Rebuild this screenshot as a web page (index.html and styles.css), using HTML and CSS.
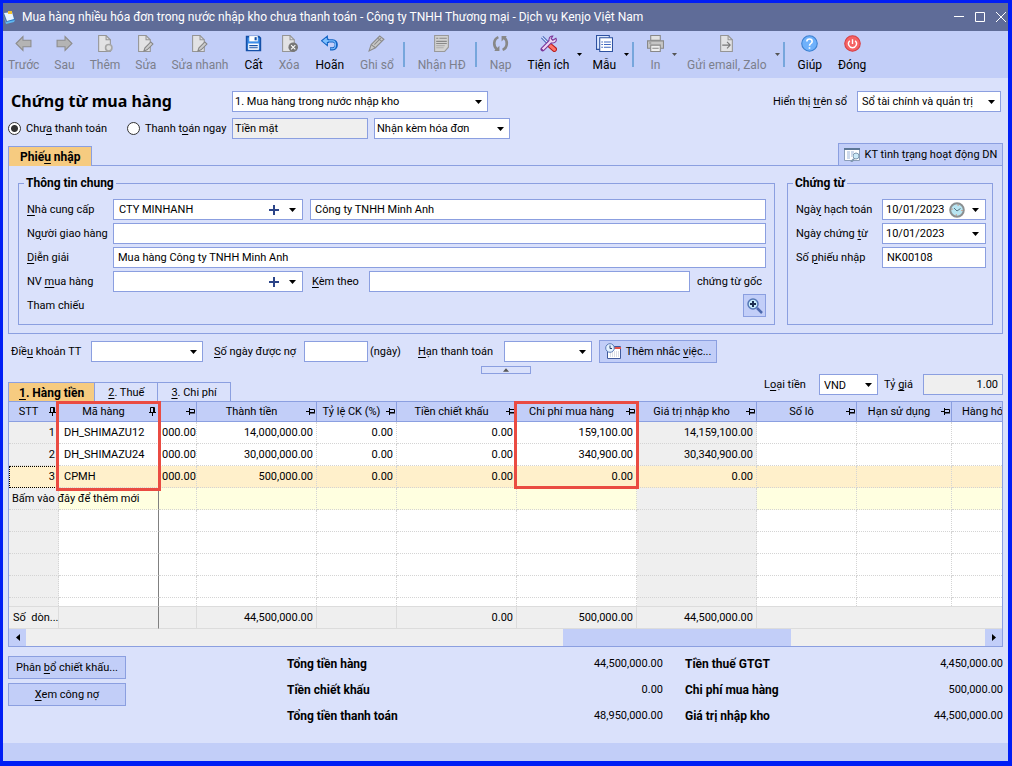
FILE: index.html
```
<!DOCTYPE html>
<html lang="vi">
<head>
    <meta charset="UTF-8">
    <meta name="viewport" content="width=device-width, initial-scale=1.0">
    <title>Chứng từ mua hàng</title>
    <link rel="stylesheet" href="styles.css">
</head>
<body>
<!-- Shared icons -->
<svg class="defs" aria-hidden="true">
    <symbol id="arrow" viewBox="0 0 16 16"><path d="M1 8L7.500 1.500V5H15V11H7.500V14.500Z" fill="#b4b4b4" stroke="#8c8c8c"/></symbol>
    <symbol id="page" viewBox="0 0 16 16"><path d="M2.500 .5H9.500L13.500 4.500V15.500H2.500Z" fill="#e2e2e4" stroke="#959595"/><path d="M9.500 .5V4.500H13.500" fill="none" stroke="#959595"/></symbol>
    <symbol id="pageEdit" viewBox="0 0 16 16"><use href="#page" width="16" height="16" x="-1"/><path d="M6.500 15L7.500 12L13 6.500L15 8.500L9.500 14Z" fill="#ccc" stroke="#858585"/></symbol>
    <symbol id="pin" viewBox="0 0 9 9"><path d="M0 4.500H3M3.500 1V8M4 2.500H8.500V5.500H4M4 6H9" fill="none" stroke="#000"/></symbol>
    <symbol id="pinned" viewBox="0 0 9 9"><path d="M2.500 5V.5H6.500V5M5.500 0V5M1 5.500H8M4.500 6V9" fill="none" stroke="#000"/></symbol>
    <symbol id="down" viewBox="0 0 7 4"><path d="M0 0H7L3.500 4Z" fill="currentColor"/></symbol>
    <symbol id="plus" viewBox="0 0 10 10"><path d="M5 0V10M0 5H10" stroke="#2b4488" stroke-width="2"/></symbol>
</svg>

<div class="window">
    <header class="titlebar">
        <svg class="app-icon" viewBox="0 0 13 14"><path d="M1 4L8 1L12 10L5 13Z" fill="#2878c8"/><path d="M1 3L9 2L11 9L4 11Z" fill="#e8f4ff"/><path d="M5 1H9V4H5Z" fill="#f4c430"/><path d="M0 4L3 12L12 10L11 12L3 14Z" fill="#60b8f0"/></svg>
        <span class="caption">Mua hàng nhiều hóa đơn trong nước nhập kho chưa thanh toán - Công ty TNHH Thương mại - Dịch vụ Kenjo Việt Nam</span>
        <button class="win-btn" aria-label="Minimize"><svg viewBox="0 0 10 10"><path d="M0 4.500H10" stroke="#fff"/></svg></button>
        <button class="win-btn" aria-label="Maximize"><svg viewBox="0 0 10 10"><path d="M.5 .5H9.500V9.500H.5Z" fill="none" stroke="#fff"/></svg></button>
        <button class="win-btn" aria-label="Close"><svg viewBox="0 0 10 10"><path d="M0 0L10 10M10 0L0 10" stroke="#fff"/></svg></button>
    </header>

    <nav class="toolbar">
        <button class="tool" disabled><svg viewBox="0 0 16 16"><use href="#arrow"/></svg>Trước</button>
        <button class="tool" disabled><svg class="flip" viewBox="0 0 16 16"><use href="#arrow"/></svg>Sau</button>
        <button class="tool" disabled><svg viewBox="0 0 16 16"><use href="#page"/><circle cx="12" cy="12" r="3" fill="#ddd" stroke="#a6a6a6" stroke-width="1.500"/></svg>Thêm</button>
        <button class="tool" disabled><svg viewBox="0 0 16 16"><use href="#pageEdit"/></svg>Sửa</button>
        <button class="tool" disabled><svg viewBox="0 0 16 16"><use href="#pageEdit"/></svg>Sửa nhanh</button>
        <button class="tool"><svg viewBox="0 0 16 16"><path d="M1.500 1.500H13L14.500 3V14.500H1.500Z" fill="#3d8ee8" stroke="#1450a8" stroke-width="1.500"/><path d="M4 1H12V6H4Z" fill="#fff"/><path d="M9 2H11V5H9Z" fill="#1450a8"/><path d="M3 8H13V14H3Z" fill="#fff"/><path d="M4 10H12M4 12H12" stroke="#1450a8"/></svg>Cất</button>
        <button class="tool" disabled><svg viewBox="0 0 16 16"><use href="#page" x="-1"/><circle cx="11.500" cy="11.500" r="4.500" fill="#777"/><path d="M9.500 9.500L13.500 13.500M13.500 9.500L9.500 13.500" stroke="#fff"/></svg>Xóa</button>
        <button class="tool"><svg viewBox="0 0 16 16"><path d="M3 5.500H11C15.500 5.500 15.500 13 11 13H8.500" fill="none" stroke="#1263c4" stroke-width="3"/><path d="M6 1L.5 5.500L6 10V7H7V4H6Z" fill="#7fc0ff" stroke="#1263c4"/><path d="M4 5.500H11C14.500 5.500 14.500 13 11 13H9" fill="none" stroke="#7fc0ff"/></svg>Hoãn</button>
        <button class="tool" disabled><svg viewBox="0 0 16 16"><path d="M1 15L3 9L11 1L15 4L7 12Z" fill="#c9c9c9" stroke="#8b8b8b"/><path d="M3 9L7 12M9 3L13 6M6 9L12 3" stroke="#8b8b8b"/></svg>Ghi sổ</button>
        <span class="sep"></span>
        <button class="tool" disabled><svg viewBox="0 0 16 16"><path d="M1.500 .5H14.500V11.500L11 15.500H1.500Z" fill="#d2d2d2" stroke="#999"/><path d="M3 3H5M6 3H13M3 6H13M3 8H13" stroke="#888"/><path d="M3 10H11M3 12H10" stroke="#b0b0b0"/></svg>Nhận HĐ</button>
        <span class="sep"></span>
        <button class="tool" disabled><svg viewBox="0 0 16 16"><path d="M6 2C1 4 1 11 5 14M10 14C15 12 15 5 11 2" fill="none" stroke="#888" stroke-width="2.500"/><path d="M2 15H7V10ZM14 1H9V6Z" fill="#888"/></svg>Nạp</button>
        <button class="tool"><svg viewBox="0 0 16 16"><path d="M2 2L9 9" stroke="#4866b8" stroke-width="3"/><path d="M2 2L8 8" stroke="#dce8ff"/><path d="M9.500 10L13.500 13.500" stroke="#b82020" stroke-width="5" stroke-linecap="round"/><path d="M9.500 10L13.500 13.500" stroke="#ff7468" stroke-width="3" stroke-linecap="round"/><path d="M2.500 13.500L10.500 5.500" stroke="#7b3598" stroke-width="4" stroke-linecap="round"/><path d="M12 1C8 1 7 7 11 7.500C15 8 16 5 15 3L12 5L10.500 3.500Z" fill="#eed8f4" stroke="#7b3598"/><path d="M2.500 13.500L11 5" stroke="#eed8f4" stroke-width="2"/></svg>Tiện ích</button>
        <svg class="drop" viewBox="0 0 7 4"><use href="#down"/></svg>
        <button class="tool"><svg viewBox="0 0 16 16"><path d="M.5 .5H12.500V13.500H.5Z" fill="#dce8ff" stroke="#2d51a0"/><path d="M3.500 2.500H15.500V15.500H3.500Z" fill="#fff" stroke="#2d51a0"/><path d="M5 6.500H6.500M7.500 6.500H14M5 9H6.500M7.500 9H14M5 11.500H6.500M7.500 11.500H14" stroke="#3f68c0"/></svg>Mẫu</button>
        <svg class="drop" viewBox="0 0 7 4"><use href="#down"/></svg>
        <span class="sep"></span>
        <button class="tool" disabled><svg viewBox="0 0 16 16"><path d="M3.500 .5H12.500V5H3.500Z" fill="#e2e2e2" stroke="#888"/><path d="M.5 5.500H15.500V12.500H.5Z" fill="#c5c5c5" stroke="#888"/><path d="M3.500 9.500H12.500V15.500H3.500Z" fill="#eee" stroke="#888"/><path d="M5 12.500H11M2 7.500H4" stroke="#888"/></svg>In</button>
        <svg class="drop dim" viewBox="0 0 7 4"><use href="#down"/></svg>
        <button class="tool" disabled><svg viewBox="0 0 16 16"><use href="#page"/><path d="M4 9.500H11M8.500 6.500L11.500 9.500L8.500 12.500" fill="none" stroke="#777"/></svg>Gửi email, Zalo</button>
        <svg class="drop dim" viewBox="0 0 7 4"><use href="#down"/></svg>
        <span class="sep"></span>
        <button class="tool"><svg viewBox="0 0 16 16"><circle cx="8" cy="8" r="7.300" fill="#6fb1fb" stroke="#3b80d0"/><path d="M5.500 6C5.500 3 10.500 3 10.500 6C10.500 8 8 8 8 10M8 11.500V13" fill="none" stroke="#fff" stroke-width="1.500"/></svg>Giúp</button>
        <button class="tool"><svg viewBox="0 0 16 16"><circle cx="8" cy="8" r="7.300" fill="#f56264" stroke="#d64045"/><path d="M5.500 5.500C2.500 8 5 12 8 12C11 12 13.500 8 10.500 5.500M8 4V8.500" fill="none" stroke="#fff" stroke-width="1.300"/></svg>Đóng</button>
    </nav>

    <main>
        <div class="row heading">
            <h1>Chứng từ mua hàng</h1>
            <select class="w-type" aria-label="Loại chứng từ"><option>1. Mua hàng trong nước nhập kho</option></select>
            <span class="spacer"></span>
            <label class="w-book" for="book">Hiển thị <u>tr</u>ên sổ</label>
            <select id="book" class="w-ledger"><option>Sổ tài chính và quản trị</option></select>
        </div>

        <div class="row payment">
            <label class="radio w-unpaid"><input type="radio" name="pay" checked><span>Chư<u>a</u> thanh toán</span></label>
            <label class="radio w-paid"><input type="radio" name="pay"><span>Thanh t<u>o</u>án ngay</span></label>
            <input class="w-cash" type="text" value="Tiền mặt" aria-label="Hình thức" readonly>
            <select class="w-invoice" aria-label="Hóa đơn"><option>Nhận kèm hóa đơn</option></select>
        </div>

        <div class="tab-row">
            <button class="tab active">Phiế<u>u</u> nhập</button>
            <span class="spacer"></span>
            <button class="btn check-btn"><svg viewBox="0 0 17 14"><path d="M.5 .5H15.500V12.500H.5Z" fill="#fff" stroke="#8b9db8"/><path d="M0 1H16" stroke="#5c7796" stroke-width="2"/><path d="M3 4H6M3 6H6M3 8H6M3 10H6M7 4H10M7 6H9M7 8H8" stroke="#9cb4d8"/><circle cx="12" cy="8" r="3" fill="#cbeaf8" stroke="#8098b0"/><path d="M10 11L7 14" stroke="#8098b0" stroke-width="2"/></svg><span>KT tình t<u>r</u>ạng hoạt động DN</span></button>
        </div>

        <section class="panel">
            <fieldset class="general">
                <legend>Thông tin chung</legend>
                <div class="row">
                    <label for="vendor"><u>N</u>hà cung cấp</label>
                    <div class="combo"><input id="vendor" type="text" value="CTY MINHANH"><button aria-label="Thêm nhà cung cấp"><svg viewBox="0 0 10 10"><use href="#plus"/></svg></button><button aria-label="Chọn nhà cung cấp"><svg class="tri" viewBox="0 0 7 4"><use href="#down"/></svg></button></div>
                    <input class="grow" type="text" value="Công ty TNHH Minh Anh" aria-label="Tên nhà cung cấp">
                </div>
                <div class="row">
                    <label for="deliver">N<u>g</u>ười giao hàng</label>
                    <input id="deliver" class="grow" type="text">
                </div>
                <div class="row">
                    <label for="desc"><u>D</u>iễn giải</label>
                    <input id="desc" class="grow" type="text" value="Mua hàng Công ty TNHH Minh Anh">
                </div>
                <div class="row">
                    <label for="buyer">NV <u>m</u>ua hàng</label>
                    <div class="combo"><input id="buyer" type="text"><button aria-label="Thêm nhân viên"><svg viewBox="0 0 10 10"><use href="#plus"/></svg></button><button aria-label="Chọn nhân viên"><svg class="tri" viewBox="0 0 7 4"><use href="#down"/></svg></button></div>
                    <label class="w-attach" for="attach"><u>K</u>èm theo</label>
                    <input id="attach" class="grow" type="text">
                    <span class="w-origin">chứng từ gốc</span>
                </div>
                <div class="row">
                    <span class="label">Tham chiếu</span>
                    <span class="spacer"></span>
                    <button class="btn zoom-btn" aria-label="Chọn tham chiếu"><svg viewBox="0 0 16 16"><path d="M10 10L15 15" stroke="#4c69ae" stroke-width="2.500"/><circle cx="6" cy="6" r="5" fill="#c7ecfa" stroke="#5577b5" stroke-width="1.500"/><path d="M6 3V9M3 6H9" stroke="#1c2f50" stroke-width="2"/></svg></button>
                </div>
            </fieldset>

            <fieldset class="voucher">
                <legend>Chứng từ</legend>
                <div class="row">
                    <label for="posted">Ngà<u>y</u> hạch toán</label>
                    <div class="combo"><input id="posted" type="text" value="10/01/2023"><button class="clock" aria-label="Giờ"><svg viewBox="0 0 16 16"><circle cx="8" cy="8" r="6.800" fill="#b8e5f2" stroke="#8b8f90" stroke-width="2"/><circle cx="8" cy="8" r="5" fill="none" stroke="#e06838" stroke-dasharray="1 6.850"/><path d="M5 6L8 9L11.500 6.500" fill="none" stroke="#567584"/></svg></button><button aria-label="Chọn ngày"><svg class="tri" viewBox="0 0 7 4"><use href="#down"/></svg></button></div>
                </div>
                <div class="row">
                    <label for="dated">Ngày chứng <u>t</u>ừ</label>
                    <div class="combo"><input id="dated" type="text" value="10/01/2023"><button aria-label="Chọn ngày"><svg class="tri" viewBox="0 0 7 4"><use href="#down"/></svg></button></div>
                </div>
                <div class="row">
                    <label for="number">Số <u>p</u>hiếu nhập</label>
                    <input id="number" class="grow" type="text" value="NK00108">
                </div>
            </fieldset>
        </section>

        <div class="row terms">
            <label class="w-term" for="term">Điề<u>u</u> khoản TT</label>
            <select id="term" class="w-terms"><option></option></select>
            <label class="w-days" for="days"><u>S</u>ố ngày được nợ</label>
            <input id="days" class="w-day" type="text">
            <span class="w-unit">(ngày)</span>
            <label class="w-due" for="due"><u>H</u>ạn thanh toán</label>
            <select id="due" class="w-dues"><option></option></select>
            <button class="btn remind-btn"><svg viewBox="0 0 17 17"><path d="M2.500 3.500H15.500V15.500H2.500Z" fill="#fff" stroke="#405a9c"/><path d="M3 4H16V6H3Z" fill="#e5534a"/><path d="M5 9H14M5 11H14M5 13H14" stroke="#b8bccc" stroke-dasharray="1 1"/><circle cx="5" cy="5" r="4.300" fill="#e4f2ff" stroke="#5d7db8"/><path d="M5 2.500V5.500H7" fill="none" stroke="#26406c"/></svg><span>Thêm nhắc <u>v</u>iệc...</span></button>
        </div>

        <button class="collapse" aria-label="Thu gọn"><svg viewBox="0 0 7 4"><path d="M0 4L3.500 0L7 4Z" fill="#555"/></svg></button>

        <div class="grid-head">
            <div class="tabs">
                <button class="tab active"><u>1</u>. Hàng tiền</button>
                <button class="tab"><u>2</u>. Thuế</button>
                <button class="tab"><u>3</u>. Chi phí</button>
            </div>
            <span class="spacer"></span>
            <label class="w-currency" for="currency">L<u>o</u>ại tiền</label>
            <select id="currency" class="w-vnd"><option>VND</option></select>
            <label class="w-rate" for="rate">Tỷ <u>g</u>iá</label>
            <input id="rate" class="w-rates" type="text" value="1.00" readonly>
        </div>

        <section class="grid">
            <table>
                <colgroup>
                    <col class="c50"><col class="c100"><col class="c38"><col class="c120"><col class="c80"><col class="c120"><col class="c120"><col class="c120"><col class="c100"><col class="c95"><col>
                </colgroup>
                <thead>
                    <tr>
                        <th><div><span>STT</span><svg><use href="#pinned"/></svg></div></th>
                        <th><div><span>Mã hàng</span><svg><use href="#pinned"/></svg></div></th>
                        <th><div><span></span><svg><use href="#pin"/></svg></div></th>
                        <th><div><span>Thành tiền</span><svg><use href="#pin"/></svg></div></th>
                        <th><div><span>Tỷ lệ CK (%)</span><svg><use href="#pin"/></svg></div></th>
                        <th><div><span>Tiền chiết khấu</span><svg><use href="#pin"/></svg></div></th>
                        <th><div><span>Chi phí mua hàng</span><svg><use href="#pin"/></svg></div></th>
                        <th><div><span>Giá trị nhập kho</span><svg><use href="#pin"/></svg></div></th>
                        <th><div><span>Số lô</span><svg><use href="#pin"/></svg></div></th>
                        <th><div><span>Hạn sử dụng</span><svg><use href="#pin"/></svg></div></th>
                        <th class="cut">Hàng hóa</th>
                    </tr>
                </thead>
                <tbody>
                    <tr><td class="gray">1</td><td class="fixed">DH_SHIMAZU12</td><td>000.00</td><td>14,000,000.00</td><td>0.00</td><td>0.00</td><td>159,100.00</td><td class="gray">14,159,100.00</td><td></td><td></td><td></td></tr>
                    <tr><td class="gray">2</td><td class="fixed">DH_SHIMAZU24</td><td>000.00</td><td>30,000,000.00</td><td>0.00</td><td>0.00</td><td>340,900.00</td><td class="gray">30,340,900.00</td><td></td><td></td><td></td></tr>
                    <tr class="selected"><td class="focus">3</td><td class="fixed">CPMH</td><td>000.00</td><td>500,000.00</td><td>0.00</td><td>0.00</td><td>0.00</td><td>0.00</td><td></td><td></td><td></td></tr>
                    <tr class="new"><td class="gray hint">Bấm vào đây để thêm mới</td><td class="fixed"></td><td></td><td></td><td></td><td></td><td></td><td class="gray"></td><td></td><td></td><td></td></tr>
                    <tr><td class="gray"></td><td class="fixed"></td><td></td><td></td><td></td><td></td><td></td><td class="gray"></td><td></td><td></td><td></td></tr>
                    <tr><td class="gray"></td><td class="fixed"></td><td></td><td></td><td></td><td></td><td></td><td class="gray"></td><td></td><td></td><td></td></tr>
                    <tr><td class="gray"></td><td class="fixed"></td><td></td><td></td><td></td><td></td><td></td><td class="gray"></td><td></td><td></td><td></td></tr>
                    <tr><td class="gray"></td><td class="fixed"></td><td></td><td></td><td></td><td></td><td></td><td class="gray"></td><td></td><td></td><td></td></tr>
                    <tr class="partial"><td class="gray"></td><td class="fixed"></td><td></td><td></td><td></td><td></td><td></td><td class="gray"></td><td></td><td></td><td></td></tr>
                </tbody>
                <tfoot>
                    <tr><td>Số&nbsp; dòn...</td><td class="fixed"></td><td></td><td>44,500,000.00</td><td></td><td>0.00</td><td>500,000.00</td><td>44,500,000.00</td><td colspan="3"></td></tr>
                </tfoot>
            </table>
            <div class="scrollbar">
                <button aria-label="Cuộn trái"><svg viewBox="0 0 4 7"><path d="M4 0V7L0 3.500Z"/></svg></button>
                <div class="track"><span class="thumb"></span></div>
                <button aria-label="Cuộn phải"><svg viewBox="0 0 4 7"><path d="M0 0V7L4 3.500Z"/></svg></button>
            </div>
            <span class="mark mark-code"></span>
            <span class="mark mark-cost"></span>
        </section>

        <section class="bottom">
            <div class="actions">
                <button class="btn"><span>Phân <u>b</u>ổ chiết khấu...</span></button>
                <button class="btn"><span><u>X</u>em công nợ</span></button>
            </div>
            <div class="totals">
                <b>Tổng tiền hàng</b><span>44,500,000.00</span><b>Tiền thuế GTGT</b><span>4,450,000.00</span>
                <b>Tiền chiết khấu</b><span>0.00</span><b>Chi phí mua hàng</b><span>500,000.00</span>
                <b>Tổng tiền thanh toán</b><span>48,950,000.00</span><b>Giá trị nhập kho</b><span>44,500,000.00</span>
            </div>
        </section>
    </main>

    <footer class="statusbar"></footer>
</div>
</body>
</html>
```
FILE: styles.css
```
* { box-sizing: border-box; }

body {
    margin: 0;
    font: 11px/14px Roboto, "Liberation Sans", sans-serif;
    color: #000;
}

button, input, select {
    font: inherit;
    color: inherit;
    margin: 0;
}

button { white-space: nowrap; }
u { text-underline-offset: 2px; }
.defs { display: none; }
.spacer, .grow { flex: 1; min-width: 0; }

.window {
    display: flex;
    flex-direction: column;
    min-height: 100vh;
    border: solid #001ef5;
    border-width: 3px 4px 5px 3px;
    background: #dae1fb;
}

/* Title bar */
.titlebar {
    display: flex;
    align-items: center;
    gap: 11px;
    height: 28px;
    padding-right: 2px;
    background: #5f6c98;
    color: #fff;
    font-size: 12px;
}

.app-icon { width: 13px; height: 14px; margin-right: -5px; }
.caption { flex: 1; white-space: nowrap; overflow: hidden; }

.win-btn {
    width: 10px;
    height: 21px;
    padding: 0;
    border: 0;
    background: none;
}

.win-btn svg { display: block; width: 10px; height: 10px; }

/* Toolbar */
.toolbar {
    display: flex;
    align-items: center;
    height: 47px;
    background: #c2cef8;
    font-size: 12px;
    line-height: 18px;
}

.tool {
    display: flex;
    flex-direction: column;
    align-items: center;
    gap: 4px;
    padding: 0 8px;
    border: 0;
    background: none;
}

.tool:nth-child(-n+4) { padding-right: 7px; }
.tool:first-child { padding-left: 5px; }
.tool:disabled { color: #7c7f8c; }
.tool svg { width: 17px; height: 17px; }
.tool .flip { transform: scaleX(-1); }
.drop { width: 5px; height: 3px; margin-right: 2px; }
.dim { color: #555; }
.sep { width: 2px; height: 25px; margin: 0 5px 0 1px; background: #76a6dc; }

/* Form controls */
main { flex: 1; padding: 13px 5px 5px; }
.row { display: flex; align-items: center; white-space: nowrap; }

input[type="text"], select, .combo {
    height: 21px;
    padding: 0 4px;
    border: 1px solid #8b9fe0;
    border-radius: 0;
    background-color: #fff;
    outline: none;
}

input[readonly] { background-color: #efefef; }

select {
    appearance: none;
    padding: 0 18px 0 2px;
    background-image: url("data:image/svg+xml,%3Csvg xmlns='http://www.w3.org/2000/svg' width='7' height='4'%3E%3Cpath d='M0 0H7L3.500 4Z'/%3E%3C/svg%3E");
    background-repeat: no-repeat;
    background-position: right 5px center;
}

.combo { display: flex; align-items: center; width: 190px; padding: 0; }
.combo input[type="text"] { flex: 1; min-width: 0; height: 19px; padding: 0 5px; border: 0; }
.combo button { width: 19px; height: 19px; padding: 0; border: 0; background: none; }
.combo svg { display: block; width: 10px; height: 10px; margin: auto; }
.combo .tri { width: 7px; height: 4px; }
.combo .clock svg { width: 16px; height: 16px; }

.btn {
    display: flex;
    align-items: center;
    justify-content: center;
    height: 23px;
    padding: 0;
    border: 1px solid #8b9fe0;
    background: #c2cef8;
}

/* Heading */
h1 {
    width: 224px;
    margin: 0;
    padding-left: 3px;
    font: bold 16px/21px "Noto Sans", sans-serif;
}

.w-type { width: 256px; }
.w-book { width: 84px; }
.w-ledger { width: 144px; margin-right: 2px; padding-left: 4px; }

.payment { margin-top: 6px; }
.radio { display: flex; align-items: center; gap: 5px; }

.radio input {
    appearance: none;
    width: 13px;
    height: 13px;
    border: 1px solid #333;
    border-radius: 50%;
    background: #fff;
}

.radio input:checked { background: radial-gradient(#333 3px, #fff 4px); }
.w-unpaid { width: 119px; }
.w-paid { width: 105px; }
.w-cash { width: 136px; margin-right: 6px; }
.payment .w-cash { padding: 0 2px; }
.w-invoice { width: 136px; }

/* Voucher panel */
.tab-row { display: flex; align-items: flex-end; margin-top: 4px; }

.tab {
    height: 20px;
    padding: 0 13px;
    border: 1px solid #8b9fe0;
    border-bottom: 0;
    background: #dae1fb;
}

.tab.active { position: relative; background: #f6cb80; font-size: 12px; font-weight: bold; }
.tab-row .tab { padding: 0 11px; }
.check-btn { width: 165px; gap: 4px; }
.check-btn svg { width: 17px; height: 14px; }

.panel {
    display: flex;
    gap: 12px;
    margin-top: -1px;
    padding: 10px 9px 8px;
    border: 1px solid #8b9fe0;
}

fieldset {
    min-width: 0;
    margin: 0;
    padding: 9px 8px 0;
    border: 1px solid #8b9fe0;
}

legend { margin-left: -3px; padding: 0 2px; font-size: 12px; font-weight: bold; }
fieldset .row { height: 21px; margin-bottom: 3px; }
fieldset .row > label:first-child, .label { width: 86px; }
.general { flex: 1; height: 149px; }
.general .combo + .grow { margin-left: 7px; }
.general .w-attach { width: 66px; padding-left: 9px; }
.w-origin { width: 76px; padding-left: 7px; }
.zoom-btn { width: 23px; }
.zoom-btn svg { width: 16px; height: 16px; }
.voucher { width: 206px; padding: 9px 6px 0 8px; }
.voucher .combo { flex: 1; min-width: 0; }
.voucher .combo input[type="text"] { padding: 0 3px; }

/* Payment terms */
.terms { margin-top: 6px; }
.terms label { padding-left: 3px; }
.w-term { width: 83px; }
.w-terms { width: 112px; }
.terms .w-days { width: 101px; padding-left: 11px; }
.w-day { width: 64px; }
.w-unit { width: 47px; padding-left: 2px; }
.w-due { width: 89px; }
.w-dues { width: 88px; }
.remind-btn { width: 118px; margin-left: 7px; gap: 4px; }
.remind-btn svg { width: 17px; height: 17px; }

.collapse {
    display: block;
    width: 50px;
    height: 8px;
    margin: 3px auto 0;
    padding: 0;
    border: 1px solid #8b9fe0;
    background: none;
}

.collapse svg { display: block; width: 6px; height: 4px; margin: auto; }

/* Detail grid */
.grid-head { display: flex; height: 28px; line-height: 21px; }
.tabs { display: flex; align-items: flex-end; }
.tabs .tab { line-height: 18px; }
.tabs .tab.active { padding: 0 10px; }
.tabs .tab + .tab { margin-left: -1px; }
.w-currency { width: 55px; }
.w-vnd { width: 59px; padding-left: 4px; }
.w-rate { width: 45px; padding-left: 6px; }
.w-rates { width: 80px; text-align: right; }

.grid {
    position: relative;
    margin-top: -1px;
    border: 1px solid #8b9fe0;
    background: #efefef;
}

table { width: 100%; table-layout: fixed; border-collapse: separate; border-spacing: 0; }
.c38 { width: 38px; }
.c50 { width: 50px; }
.c80 { width: 80px; }
.c95 { width: 95px; }
.c100 { width: 100px; }
.c120 { width: 120px; }

th {
    height: 20px;
    padding: 0;
    border-right: 1px solid #8b9fe0;
    border-bottom: 1px solid #8b9fe0;
    background: #c2cef8;
    font-weight: normal;
    white-space: nowrap;
    overflow: hidden;
}

th div { display: flex; align-items: center; padding-right: 1px; }
th span { flex: 1; }
th svg { width: 9px; height: 9px; }
th.cut { padding-left: 10px; border-right: 0; text-align: left; }

td {
    height: 22px;
    padding: 0 3px;
    border-right: 1px dotted #d4d4d4;
    border-bottom: 1px dotted #d4d4d4;
    background: #fff;
    text-align: right;
    white-space: nowrap;
}

td.fixed { padding-left: 5px; border-right: 1px solid #808080; text-align: left; }
td:last-child { border-right: 0; }
.selected td { background: #fff0cb; }
.selected .focus { outline: 1px dotted #000; outline-offset: -1px; }
.new td { background: #ffffe0; }
td.gray, .new td.gray { background: #efefef; }
.new .hint { position: relative; text-align: left; }
.partial td { height: 8px; border-bottom: 0; }

tfoot td {
    height: 23px;
    border: solid #dcdcdc;
    border-width: 1px 1px 1px 0;
    background: #efefef;
}

tfoot td:first-child { padding-left: 4px; text-align: left; }

.scrollbar { display: flex; height: 17px; }
.scrollbar button { width: 17px; padding: 0; border: 0; background: #c2cef8; }
.scrollbar svg { display: block; width: 4px; height: 7px; margin: auto; }
.track { flex: 1; display: grid; grid-template-columns: 537fr 228fr 194fr; }
.thumb { grid-column: 2; background: #c2cef8; }

/* Red highlights over the grid */
.mark { position: absolute; top: -1px; border: 3px solid #ea4b42; }
.mark-code { left: 47px; width: 105px; height: 90px; }
.mark-cost { left: 505px; width: 125px; height: 88px; }

/* Totals */
.bottom { display: flex; margin-top: 9px; }
.actions { display: grid; gap: 4px; width: 118px; align-content: start; }

.totals {
    flex: 1;
    display: grid;
    grid-template-columns: 200px 176fr 150px 190fr;
    grid-auto-rows: 26px;
    padding-left: 161px;
    line-height: 16px;
}

.totals b { font-size: 12px; }
.totals span { text-align: right; }
.totals :nth-child(4n+3) { padding-left: 22px; }

.statusbar { height: 18px; background: #c2cef8; }
```
